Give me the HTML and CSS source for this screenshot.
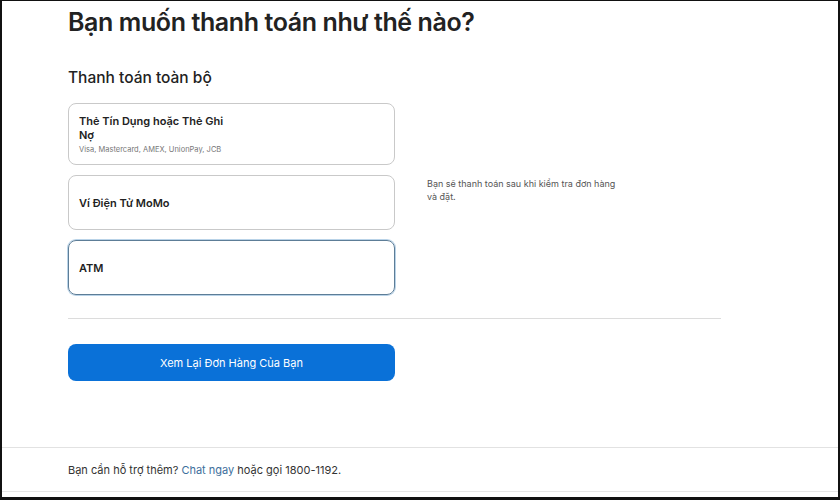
FILE: index.html
```html
<!DOCTYPE html>
<html lang="vi">
<head>
<meta charset="utf-8">
<title>Thanh toán</title>
<link rel="stylesheet" href="styles.css">
</head>
<body>
<div class="frame">
  <main class="main">
    <h1 class="title">Bạn muốn thanh toán như thế nào?</h1>
    <h2 class="subtitle">Thanh toán toàn bộ</h2>
    <div class="row">
      <div class="options">
        <div class="option option-tall">
          <div class="opt-name narrow">Thẻ Tín Dụng hoặc Thẻ Ghi Nợ</div>
          <div class="opt-sub">Visa, Mastercard, AMEX, UnionPay, JCB</div>
        </div>
        <div class="option">
          <div class="opt-name">Ví Điện Tử MoMo</div>
        </div>
        <div class="option selected">
          <div class="opt-name">ATM</div>
        </div>
      </div>
      <p class="note">Bạn sẽ thanh toán sau khi kiểm tra đơn hàng và đặt.</p>
    </div>
    <hr class="divider">
    <button class="cta">Xem Lại Đơn Hàng Của Bạn</button>
  </main>
  <footer class="footer">
    <p class="help">Bạn cần hỗ trợ thêm? <a class="link" href="#">Chat ngay</a> hoặc gọi 1800-1192.</p>
  </footer>
</div>
</body>
</html>
```

FILE: styles.css
```css
* { box-sizing: border-box; }
html, body { margin: 0; padding: 0; background: #fff; }
body {
  width: 840px;
  height: 500px;
  font-family: "Inter", "Liberation Sans", sans-serif;
  color: #1d1d1f;
}
.frame {
  width: 840px;
  height: 500px;
  border-top: 1px solid #111;
  border-left: 2px solid #111;
  border-right: 2px solid #111;
  border-bottom: 3px solid #111;
  display: flex;
  flex-direction: column;
}
.main {
  flex: 1;
  padding: 3px 0 0 66px;
}
.title {
  margin: 0;
  font-size: 25px;
  font-weight: 600;
  letter-spacing: -0.4px;
  line-height: 36px;
  color: #222;
}
.subtitle {
  margin: 28px 0 0;
  font-size: 15.5px;
  font-weight: 500;
  line-height: 20px;
  color: #222;
}
.row {
  display: flex;
  gap: 32px;
  margin-top: 15px;
}
.options {
  width: 327px;
  display: flex;
  flex-direction: column;
  gap: 10px;
}
.option {
  height: 55px;
  border: 1px solid #c9c9c9;
  border-radius: 8px;
  padding: 0 10px;
  display: flex;
  flex-direction: column;
  justify-content: center;
}
.option-tall {
  height: 62px;
  justify-content: flex-start;
  padding-top: 10px;
}
.opt-name {
  font-size: 11px;
  font-weight: 600;
  line-height: 14px;
  color: #222;
}
.narrow { width: 150px; }
.opt-sub {
  margin-top: 3px;
  font-size: 7.5px;
  color: #777;
  line-height: 10px;
}
.selected {
  border: 1.5px solid #5d7d97;
  box-shadow: 0 0 0 1px #b9d3e8;
}
.note {
  margin: 74px 0 0;
  width: 200px;
  font-size: 9px;
  line-height: 13px;
  color: #555;
}
.divider {
  margin: 23px 0 0;
  width: 653px;
  border: 0;
  border-top: 1px solid #dcdcdc;
}
.cta {
  margin-top: 25px;
  width: 327px;
  height: 37px;
  border: 0;
  border-radius: 8px;
  background: #0a71d8;
  color: #fff;
  font-family: "Inter", "Liberation Sans", sans-serif;
  font-size: 11px;
  display: block;
}
.footer {
  border-top: 1px solid #e2e2e2;
  border-bottom: 1px solid #e6e6e6;
  height: 45px;
  margin-bottom: 5px;
  padding-left: 66px;
  display: flex;
  align-items: center;
}
.help {
  margin: 0;
  font-size: 11px;
  color: #333;
}
.link { color: #3d6f9c; text-decoration: none; }
```
